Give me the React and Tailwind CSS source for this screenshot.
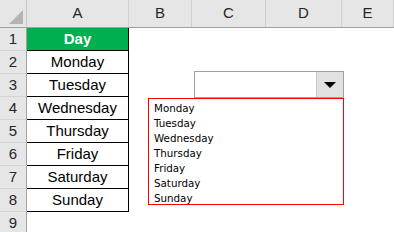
const days = ["Monday", "Tuesday", "Wednesday", "Thursday", "Friday", "Saturday", "Sunday"];
const cols = ["A", "B", "C", "D", "E"];
const widths = ["w-[102px]", "w-[63px]", "w-[74px]", "w-[76px]", "flex-1"];

function HeaderRow() {
  return (
    <div className="flex h-[28px] bg-[#e6e6e6] border-b border-[#a0a0a0]">
      <div className="relative w-[27px] shrink-0 border-r border-[#c8c8c8]">
        <div className="absolute right-[3px] bottom-[3px] w-0 h-0 border-l-[14px] border-l-transparent border-b-[14px] border-b-[#b4b4b4]" />
      </div>
      {cols.map((c, i) => (
        <div
          key={c}
          className={`${widths[i]} shrink-0 flex items-center justify-center border-r border-[#d0d0d0] text-[15px] text-[#262626]`}
        >
          {c}
        </div>
      ))}
    </div>
  );
}

function RowNum({ n }) {
  return (
    <div className="w-[27px] shrink-0 flex items-center justify-center bg-[#e6e6e6] border-r border-[#a0a0a0] border-b border-b-[#d4d4d4] text-[15px] text-[#262626]">
      {n}
    </div>
  );
}

export default function App() {
  const rows = ["Day", ...days, ""];
  return (
    <div
      className="relative w-[394px] h-[232px] overflow-hidden bg-white"
      style={{ fontFamily: '"Liberation Sans", Arial, sans-serif' }}
    >
      <HeaderRow />
      {rows.map((v, i) => (
        <div key={i} className="flex h-[23px]">
          <RowNum n={i + 1} />
          {i === 0 ? (
            <div className="w-[102px] shrink-0 flex items-center justify-center pt-[1px] bg-[#00b050] border-r border-b border-black text-white font-bold text-[15px]">
              {v}
            </div>
          ) : i < 8 ? (
            <div className="w-[102px] shrink-0 flex items-center justify-center pt-[1px] border-r border-b border-black text-black text-[15px]">
              {v}
            </div>
          ) : (
            <div className="w-[102px] shrink-0" />
          )}
          <div className="flex-1" />
        </div>
      ))}

      {/* combo box */}
      <div className="absolute left-[194px] top-[71px] w-[150px] h-[27px] bg-white border border-[#a0a0a0] flex justify-end">
        <div className="w-[27px] h-full bg-[#e1e1e1] border-l border-[#c8c8c8] flex items-center justify-center">
          <div className="w-0 h-0 border-l-[6px] border-r-[6px] border-t-[6px] border-l-transparent border-r-transparent border-t-black" />
        </div>
      </div>

      {/* dropdown list */}
      <div
        className="absolute left-[148px] top-[98px] w-[196px] h-[107px] bg-white border border-[#ff0000] pl-[5px] pt-[2px]"
        style={{ fontFamily: '"DejaVu Sans", Tahoma, sans-serif' }}
      >
        {days.map((d) => (
          <div key={d} className="h-[15px] leading-[15px] text-[10.3px] text-black">
            {d}
          </div>
        ))}
      </div>
    </div>
  );
}
